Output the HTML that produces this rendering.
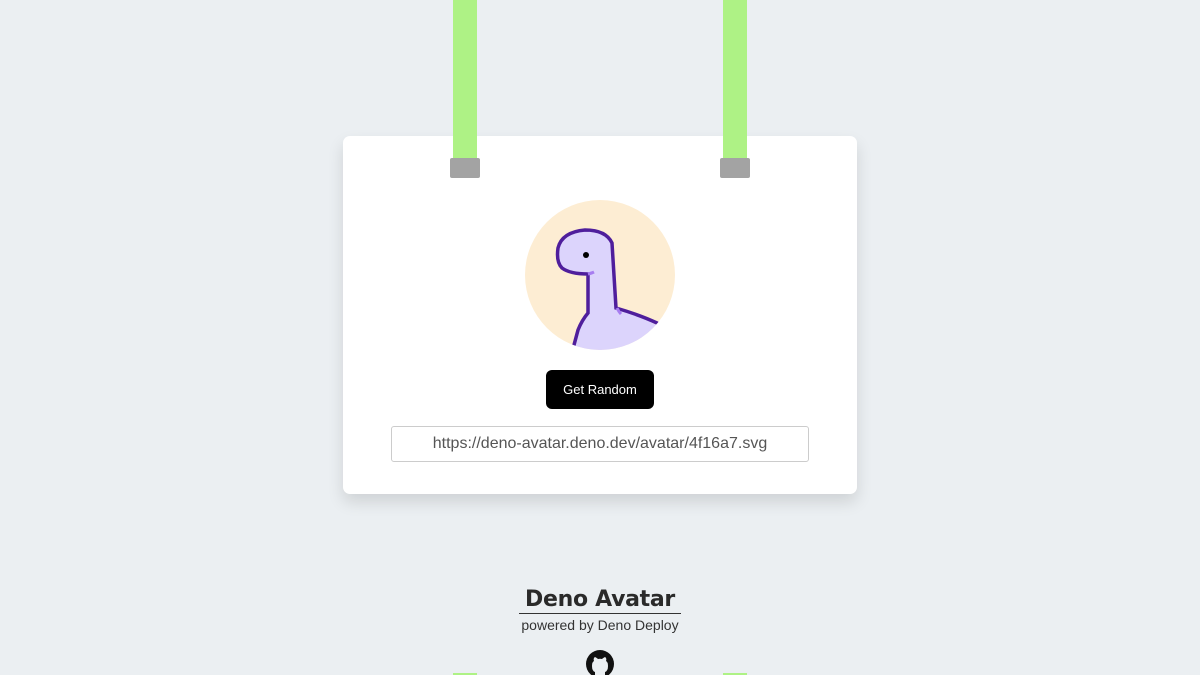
<!DOCTYPE html>
<html><head><style>
body{margin:0;width:1200px;height:675px;background:#ebeff2;font-family:"Liberation Sans",sans-serif;position:relative;overflow:hidden}
.strap{position:absolute;width:24px;background:#aef285}
.clip{position:absolute;width:30px;height:20px;background:#a3a3a3;top:158px;border-radius:2px}
.card{position:absolute;left:343px;top:136px;width:514px;height:358px;background:#fff;border-radius:7px;box-shadow:0 8px 16px rgba(0,0,0,.12)}
.btn{position:absolute;left:546px;top:370px;width:108px;height:39px;background:#000;color:#fff;border-radius:6px;font-size:13px;display:flex;align-items:center;justify-content:center}
.url{position:absolute;left:391px;top:426px;width:416px;height:34px;border:1px solid #ccc;border-radius:3px;color:#555;font-size:16px;display:flex;align-items:center;justify-content:center}
.title{position:absolute;left:519px;top:587px;width:162px;text-align:center;white-space:nowrap;font-weight:bold;font-size:22px;color:#2a2a2a;border-bottom:1px solid #333;line-height:26px;font-family:"DejaVu Sans",sans-serif;letter-spacing:-0.3px}
.sub{position:absolute;left:500px;top:617px;width:200px;text-align:center;font-size:14px;color:#333}
</style></head><body>
<div class="card"></div>
<div class="strap" style="left:453px;top:0;height:168px"></div>
<div class="strap" style="left:723px;top:0;height:168px"></div>
<div class="clip" style="left:450px"></div>
<div class="clip" style="left:720px"></div>
<svg style="position:absolute;left:0;top:0" width="1200" height="675">
<defs><clipPath id="c"><circle cx="600" cy="275" r="75"/></clipPath></defs>
<circle cx="600" cy="275" r="75" fill="#fdedd3"/>
<g clip-path="url(#c)">
<path d="M570,360 L578,330 Q582,320 588,313 L588,274 Q570,274 562,268 Q556,262 558,248 Q562,232 585,230 Q606,230 612,243 L616,308 Q640,315 665,330 L665,360 Z" fill="#dcd4fc"/>
<path d="M574,345 L578,330 Q582,320 588,313 L588,274 Q570,274 562,268 Q556,262 558,248 Q562,232 585,230 Q606,230 612,243 L616,308 Q640,315 657,323" fill="none" stroke="#4f1e9c" stroke-width="3.5" stroke-linecap="round"/>
</g>
<circle cx="586" cy="255" r="3" fill="#000"/>
<path d="M588,274 Q592,273 594,272" stroke="#a77df0" stroke-width="3" fill="none"/>
<path d="M617,308 Q619,312 621,314" stroke="#a77df0" stroke-width="3" fill="none"/>
<g transform="translate(586,650)"><circle cx="14" cy="14" r="14" fill="#111"/><path d="M9,28 L9,22 Q6,21 6,16 Q6,12 8,11 Q7,8 9,7 Q11,8 12,9 Q14,8.5 16,9 Q17,8 19,7 Q21,8 20,11 Q22,12 22,16 Q22,21 19,22 L19,28 Z" fill="#ebeff2"/></g>
<rect x="453" y="673" width="24" height="2" fill="#aef285"/>
<rect x="723" y="673" width="24" height="2" fill="#aef285"/>
</svg>
<div class="btn">Get Random</div>
<div class="url">https://deno-avatar.deno.dev/avatar/4f16a7.svg</div>
<div class="title">Deno Avatar</div>
<div class="sub">powered by Deno Deploy</div>
</body></html>
